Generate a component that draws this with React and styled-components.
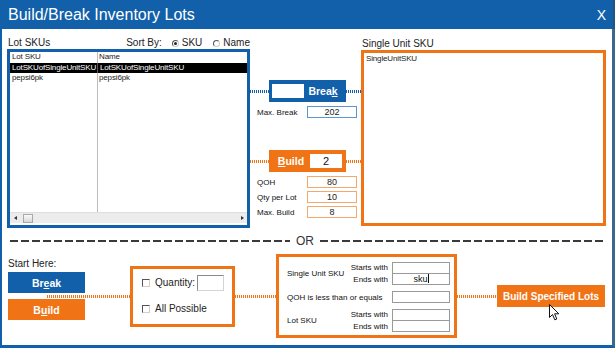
import React from "react"
import styled, { createGlobalStyle } from "styled-components"

const blue = "#1160a9"
const orange = "#f07416"

const GlobalStyle = createGlobalStyle`
  html, body {
    margin: 0;
    padding: 0;
    background: #fff;
  }
  body {
    font-family: "Liberation Sans", Arial, sans-serif;
    color: #222;
  }
`

const Window = styled.div`
  width: 615px;
  height: 348px;
  display: flex;
  flex-direction: column;
  background: #fff;
  overflow: hidden;
`

const TitleBar = styled.div`
  height: 29px;
  flex: none;
  box-sizing: border-box;
  background: ${blue};
  border-right: 2px solid #2c527c;
  display: flex;
  align-items: center;
  justify-content: space-between;
  padding: 1px 7px 0 8px;
  color: #fff;
  font-size: 16px;
`

const Close = styled.span`
  font-size: 14px;
`

const Body = styled.div`
  flex: 1;
  display: flex;
  flex-direction: column;
  border-left: 2px solid ${blue};
  border-right: 3px solid #3a6894;
  border-bottom: 3px solid ${blue};
  padding: 0 6px 0 5px;
`

const Top = styled.div`
  display: flex;
  height: 199px;
`

const LeftCol = styled.div`
  width: 243px;
  display: flex;
  flex-direction: column;
`

const LabelRow = styled.div`
  height: ${(p) => p.$h}px;
  box-sizing: border-box;
  display: flex;
  align-items: flex-end;
  font-size: 10px;
  line-height: 12px;
  padding-left: 1px;
`

const SortGroup = styled.div`
  margin-left: auto;
  display: flex;
  align-items: center;
  gap: 3px;
`

const SortLabel = styled.span`
  margin-right: 7px;
`

const Radio = styled.span`
  width: 7px;
  height: 7px;
  box-sizing: border-box;
  border-radius: 50%;
  border: 1px solid;
  border-color: #555 #ccc #ccc #555;
  display: flex;
  align-items: center;
  justify-content: center;
  margin-left: ${(p) => p.$ml || 0}px;
  &::after {
    content: "";
    width: 3px;
    height: 3px;
    border-radius: 50%;
    background: ${(p) => (p.$on ? "#222" : "transparent")};
  }
`

const ListBox = styled.div`
  height: 179px;
  box-sizing: border-box;
  border: 3px solid ${blue};
  display: flex;
  flex-direction: column;
  background: #fff;
`

const ListTable = styled.div`
  flex: 1;
  display: grid;
  grid-template-columns: 87px 1fr;
  grid-auto-rows: 10.5px;
  align-content: start;
  font-size: 8px;
  line-height: 10.5px;
  letter-spacing: -0.15px;
  background: linear-gradient(#bcbcbc, #bcbcbc) 87px 0 / 1px 100% no-repeat;
`

const Cell = styled.div`
  padding-left: 2px;
  white-space: nowrap;
  overflow: hidden;
  background: ${(p) => (p.$sel ? "#000" : "transparent")};
  color: ${(p) => (p.$sel ? "#fff" : "#222")};
  border-left: ${(p) => (p.$sel && p.$second ? "1px solid #555" : "0")};
`

const ScrollBar = styled.div`
  height: 11px;
  margin: 0 0 2px;
  background: #ececec;
  border-top: 1px solid #dedede;
  box-sizing: border-box;
  display: flex;
  align-items: center;
`

const Arrow = styled.span`
  width: 10px;
  height: 10px;
  display: flex;
  align-items: center;
  justify-content: center;
  &::after {
    content: "";
    border-top: 2.5px solid transparent;
    border-bottom: 2.5px solid transparent;
    ${(p) => (p.$right ? "border-left: 3px solid #333;" : "border-right: 3px solid #333;")}
  }
`

const Thumb = styled.span`
  width: 10px;
  height: 9px;
  margin-left: 3px;
  box-sizing: border-box;
  border: 1px solid #a8a8a8;
  background: linear-gradient(#fafafa, #d8d8d8);
  margin-right: auto;
`

const MidCol = styled.div`
  width: 111px;
  padding-top: 51px;
  display: flex;
  flex-direction: column;
`

const ActionRow = styled.div`
  display: flex;
  align-items: center;
  height: 22px;
  margin-top: ${(p) => p.$mt || 0}px;
`

const Dotted = styled.div`
  height: 3px;
  flex: ${(p) => (p.$w ? "none" : 1)};
  width: ${(p) => (p.$w ? `${p.$w}px` : "auto")};
  margin-left: ${(p) => p.$ml || 0}px;
  background: repeating-linear-gradient(to right, ${(p) => p.$color} 0 1.2px, transparent 1.2px 2px);
`

const ActionBox = styled.div`
  width: 77px;
  height: 22px;
  box-sizing: border-box;
  background: ${(p) => p.$color};
  display: flex;
  align-items: center;
  padding: 0 4px 0 3px;
`

const BoxInput = styled.div`
  width: 32px;
  height: 14px;
  background: #fff;
  font-size: 11px;
  line-height: 14px;
  text-align: center;
  color: #111;
`

const BoxLabel = styled.span`
  flex: 1;
  text-align: center;
  color: #fff;
  font-weight: bold;
  font-size: 10.5px;
`

const Key = styled.span`
  text-decoration: underline;
  text-underline-offset: 1px;
`

const FieldRow = styled.div`
  display: flex;
  align-items: center;
  height: 12px;
  padding-left: 7px;
  margin-top: ${(p) => p.$mt || 0}px;
  font-size: 8px;
  color: #111;
`

const FieldLabel = styled.span`
  width: 50px;
`

const FieldInput = styled.div`
  width: 50px;
  height: 12px;
  box-sizing: border-box;
  border: 1px solid ${(p) => p.$color};
  font-size: 9px;
  line-height: 10px;
  text-align: center;
  color: #222;
`

const RightCol = styled.div`
  width: 245px;
  display: flex;
  flex-direction: column;
`

const UnitBox = styled.div`
  height: 176px;
  box-sizing: border-box;
  border: 3px solid ${orange};
  padding: 1px 2px;
  font-size: 8px;
  line-height: 10px;
  letter-spacing: -0.15px;
`

const Separator = styled.div`
  display: flex;
  align-items: center;
  height: 12px;
  margin: 7px 1px 0 3px;
`

const Dashes = styled.div`
  height: 2px;
  flex: ${(p) => (p.$w ? "none" : 1)};
  width: ${(p) => (p.$w ? `${p.$w}px` : "auto")};
  background: repeating-linear-gradient(to right, #3a3a3a 0 8px, transparent 8px 11px);
`

const Or = styled.span`
  font-size: 12px;
  color: #333;
  margin: 0 6px;
`

const Bottom = styled.div`
  display: flex;
  align-items: center;
  height: 84px;
  margin-top: 7px;
`

const StartCol = styled.div`
  width: 77px;
  margin-left: 1px;
  align-self: stretch;
  display: flex;
  flex-direction: column;
  padding-top: 4px;
`

const StartLabel = styled.div`
  font-size: 10px;
  line-height: 12px;
  margin-bottom: 2px;
`

const FlatButton = styled.div`
  height: ${(p) => p.$h || 21}px;
  width: ${(p) => (p.$w ? `${p.$w}px` : "auto")};
  flex: none;
  background: ${(p) => p.$color};
  color: #fff;
  font-weight: bold;
  font-size: ${(p) => p.$fs || 10.5}px;
  display: flex;
  align-items: center;
  justify-content: center;
  position: relative;
`

const ButtonGap = styled.div`
  height: 6px;
  display: flex;
  align-items: center;
`

const OptionBox = styled.div`
  width: ${(p) => p.$w}px;
  height: ${(p) => p.$h}px;
  flex: none;
  box-sizing: border-box;
  border: 3px solid ${orange};
  display: flex;
  flex-direction: column;
  padding: ${(p) => p.$pad};
`

const CheckRow = styled.label`
  display: flex;
  align-items: center;
  height: ${(p) => p.$h}px;
  margin-top: ${(p) => p.$mt || 0}px;
  font-size: 10px;
  gap: 5px;
`

const Check = styled.span`
  width: 8px;
  height: 8px;
  box-sizing: border-box;
  border: 1px solid;
  border-color: #555 #d0d0d0 #d0d0d0 #555;
  background: #fff;
`

const QtyInput = styled.span`
  width: 27px;
  height: 16px;
  box-sizing: border-box;
  border: 1px solid;
  border-color: #8a8a8a #d4d4d4 #d4d4d4 #8a8a8a;
  margin-left: -3px;
`

const FilterGroup = styled.div`
  display: grid;
  grid-template-columns: 1fr auto 58px;
  grid-template-rows: ${(p) => (p.$single ? "12px" : "12px 11px")};
  margin-top: ${(p) => p.$mt || 0}px;
  font-size: 8px;
  color: #111;
`

const MainLabel = styled.span`
  grid-row: 1 / -1;
  align-self: center;
`

const SubLabel = styled.span`
  text-align: right;
  padding-right: 4px;
  line-height: 12px;
`

const FilterInput = styled.div`
  height: 12px;
  box-sizing: border-box;
  border: 1px solid #9a9a9a;
  margin-top: ${(p) => (p.$stacked ? -1 : 0)}px;
  font-size: 9px;
  line-height: 10px;
  text-align: center;
  color: #111;
`

const Caret = styled.span`
  display: inline-block;
  width: 1px;
  height: 9px;
  background: #111;
  vertical-align: -1px;
`

const Cursor = styled.svg`
  position: absolute;
  left: 52px;
  top: 19px;
`

const App = () => {
  return (
    <Window>
      <GlobalStyle />
      <TitleBar>
        <span>Build/Break Inventory Lots</span>
        <Close>X</Close>
      </TitleBar>
      <Body>
        <Top>
          <LeftCol>
            <LabelRow $h={20}>
              <span>Lot SKUs</span>
              <SortGroup>
                <SortLabel>Sort By:</SortLabel>
                <Radio $on />
                <span>SKU</span>
                <Radio $ml={8} />
                <span>Name</span>
              </SortGroup>
            </LabelRow>
            <ListBox>
              <ListTable>
                <Cell>Lot SKU</Cell>
                <Cell>Name</Cell>
                <Cell $sel>LotSKUofSingleUnitSKU</Cell>
                <Cell $sel $second>LotSKUofSingleUnitSKU</Cell>
                <Cell>pepsi6pk</Cell>
                <Cell>pepsi6pk</Cell>
              </ListTable>
              <ScrollBar>
                <Arrow />
                <Thumb />
                <Arrow $right />
              </ScrollBar>
            </ListBox>
          </LeftCol>

          <MidCol>
            <ActionRow>
              <Dotted $w={19} $color={blue} />
              <ActionBox $color={blue}>
                <BoxInput />
                <BoxLabel>
                  Brea<Key>k</Key>
                </BoxLabel>
              </ActionBox>
              <Dotted $color={blue} />
            </ActionRow>
            <FieldRow $mt={4}>
              <FieldLabel>Max. Break</FieldLabel>
              <FieldInput $color="#5d95cf">202</FieldInput>
            </FieldRow>

            <ActionRow $mt={32}>
              <Dotted $w={19} $color={orange} />
              <ActionBox $color={orange}>
                <BoxLabel>
                  <Key>B</Key>uild
                </BoxLabel>
                <BoxInput>2</BoxInput>
              </ActionBox>
              <Dotted $color={orange} />
            </ActionRow>
            <FieldRow $mt={4}>
              <FieldLabel>QOH</FieldLabel>
              <FieldInput $color="#f4a86e">80</FieldInput>
            </FieldRow>
            <FieldRow $mt={3}>
              <FieldLabel>Qty per Lot</FieldLabel>
              <FieldInput $color="#f4a86e">10</FieldInput>
            </FieldRow>
            <FieldRow $mt={3}>
              <FieldLabel>Max. Build</FieldLabel>
              <FieldInput $color="#f4a86e">8</FieldInput>
            </FieldRow>
          </MidCol>

          <RightCol>
            <LabelRow $h={21}>
              <span>Single Unit SKU</span>
            </LabelRow>
            <UnitBox>SingleUnitSKU</UnitBox>
          </RightCol>
        </Top>

        <Separator>
          <Dashes $w={280} />
          <Or>OR</Or>
          <Dashes />
        </Separator>

        <Bottom>
          <StartCol>
            <StartLabel>Start Here:</StartLabel>
            <FlatButton $color={blue}>
              <span>
                Br<Key>e</Key>ak
              </span>
            </FlatButton>
            <ButtonGap>
              <Dotted $ml={39} $color={orange} />
            </ButtonGap>
            <FlatButton $color={orange}>
              <span>
                B<Key>u</Key>ild
              </span>
            </FlatButton>
          </StartCol>

          <Dotted $w={45} $color={orange} />

          <OptionBox $w={105} $h={61} $pad="6px 0 0 9px">
            <CheckRow $h={16}>
              <Check />
              <span>Quantity:</span>
              <QtyInput />
            </CheckRow>
            <CheckRow $h={12} $mt={12}>
              <Check />
              <span>All Possible</span>
            </CheckRow>
          </OptionBox>

          <Dotted $w={41} $color={orange} />

          <OptionBox $w={181} $h={84} $pad="5px 4px 0 8px">
            <FilterGroup>
              <MainLabel>Single Unit SKU</MainLabel>
              <SubLabel>Starts with</SubLabel>
              <FilterInput />
              <SubLabel>Ends with</SubLabel>
              <FilterInput $stacked>
                sku<Caret />
              </FilterInput>
            </FilterGroup>
            <FilterGroup $single $mt={6}>
              <MainLabel>QOH is less than or equals</MainLabel>
              <span />
              <FilterInput />
            </FilterGroup>
            <FilterGroup $mt={6}>
              <MainLabel>Lot SKU</MainLabel>
              <SubLabel>Starts with</SubLabel>
              <FilterInput />
              <SubLabel>Ends with</SubLabel>
              <FilterInput $stacked />
            </FilterGroup>
          </OptionBox>

          <Dotted $w={40} $color={orange} />

          <FlatButton $color={orange} $w={108} $h={22} $fs={10}>
            Build Specified Lots
            <Cursor width="11" height="17" viewBox="0 0 11 17">
              <path
                d="M0.5 0.5 L0.5 13.5 L3.5 10.5 L5.8 15.8 L7.8 15 L5.6 9.8 L9.8 9.8 Z"
                fill="#fff"
                stroke="#111"
                strokeWidth="1"
                strokeLinejoin="round"
              />
            </Cursor>
          </FlatButton>
        </Bottom>
      </Body>
    </Window>
  )
}

export default App
